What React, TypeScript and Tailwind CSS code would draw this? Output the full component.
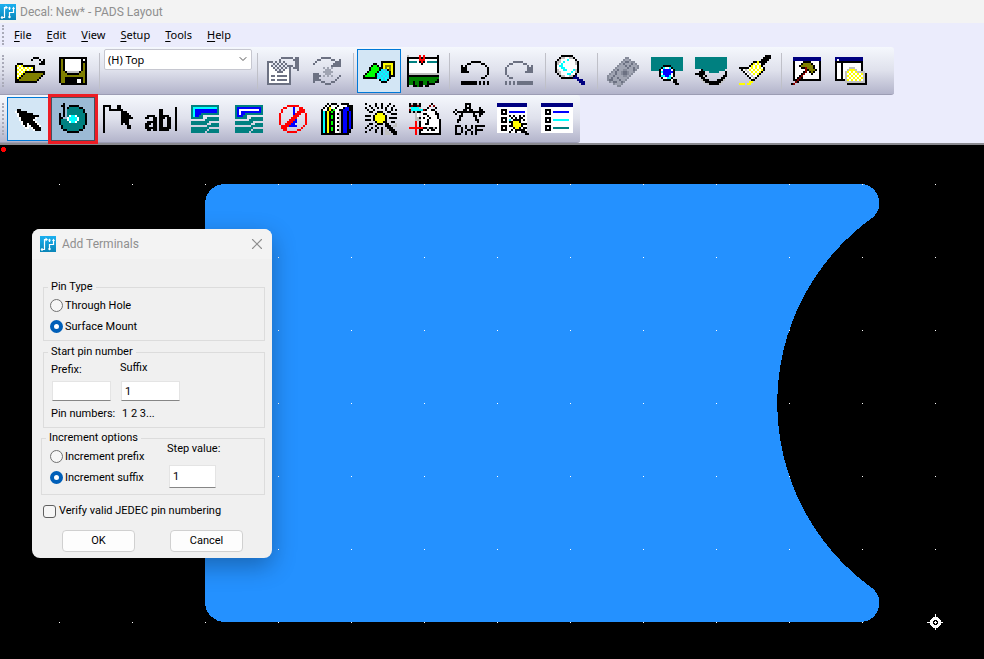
import { useState, type ReactNode } from "react";
import clsx from "clsx";
import { X, ChevronDown } from "lucide-react";

// one letter per colour in the 16x16 icon bitmaps below
const palette: Record<string, string> = {
  k: "#000000",
  w: "#ffffff",
  s: "#c0c0c0",
  g: "#6c7182",
  h: "#a0a4b2",
  m: "#868b9a",
  y: "#ffff00",
  o: "#808000",
  t: "#008080",
  b: "#0000ff",
  n: "#000080",
  c: "#00ffff",
  a: "#38c8f0",
  r: "#ff0000",
  d: "#800000",
  e: "#00ff00",
  f: "#008000",
};

const icons: Record<string, string[]> = {
  open: [
    "",
    "..........kkk",
    ".........k...k.k",
    "..............kk",
    "..kkk........kkk",
    ".kywykkkkkk",
    ".kwywywywyk",
    ".kywywywywk",
    ".kwywykkkkkkkkkk",
    ".kywykoooooooook",
    ".kwykoooooooook",
    ".kykoooooooook",
    ".kkoooooooook",
    ".kkkkkkkkkkk",
  ],
  save: [
    "",
    ".kkkkkkkkkkkkkk",
    ".kokwwwwwwwwkwk",
    ".kokwwwwwwwwkkk",
    ".kokwwwwwwwwkok",
    ".kokwwwwwwwwkok",
    ".kokwwwwwwwwkok",
    ".kokwwwwwwwwkok",
    ".kooksssssskook",
    ".koookkkkkkoook",
    ".kooooooooooook",
    ".kookkkkkkkkkok",
    ".kookkkkkkwwkok",
    ".kookkkkkkwwkok",
    "..kkkkkkkkkkkkk",
  ],
  props: [
    "",
    ".......gggggg.gg",
    "......g......ggg",
    "ggg.g.g.g.....gg",
    "gw.g.g.g.g....gg",
    "gwg.g.g.g.ggg.gg",
    "gwwg.g.g.g.g.ggg",
    "gwwwg.g.gwwg...g",
    "gwwwwgggwwwg",
    "gwwwwwwwwwwg",
    "gwggwgggggwg",
    "gwwwwwwwwwwg",
    "gwggwgggggwg",
    "gwwwwwwwwwwg",
    "gggggggggggg",
  ],
  sync: [
    "",
    ".....ggggg",
    "...gg.....gg..g",
    "..g.........ggg",
    ".g.........gggg",
    "..........ggggg",
    "......h.h.h",
    ".......hhh",
    "......hhhhh",
    ".ggg...hhh",
    ".gggg.h.h.h...g",
    ".ggg.........g",
    ".gggg.......g",
    ".g...gg...gg",
    ".......ggg",
  ],
  shapes: [
    "",
    "",
    "",
    ".........kkkkkkk",
    ".....kk..kyyyyyk",
    "....keek.kyoooyk",
    "...keeeekkyoyoyk",
    "...keeeekcaakoyk",
    "..keeeekcacackyk",
    ".keeeekcacacakyk",
    "keeeeekacacackkk",
    "kkkkkkkcacacak",
    "........kcack",
    ".........kkk",
  ],
  board: [
    "s.....r.r......k",
    "kkkkkkrkrkkkkkkk",
    "kwwwwwrrrwwwwwwk",
    "kttttwkrkwtttttk",
    "kwwwwwwkwwwwwwwk",
    "kwwwwwwwwwwwwwwk",
    "kwwwwwwwwwwwwwwk",
    "kwwwwwwwwwwwwwwk",
    "kwwwwwwwwwwwwwwk",
    "ksssssssssssssss",
    "kkkkkkkkkkkkkkkk",
    "kfffffffffffffff",
    "kffffffffffffffk",
    "kffkffkkffkfffkk",
    "kffkffkkffkkkk",
    "k..kkfkk.kk",
  ],
  undo: [
    "",
    "",
    "",
    "......kkkkk",
    "....kk.....kk",
    ".k.k.........k",
    ".kkk..........k",
    ".kkk..........k",
    ".kkkk.........k",
    "..............k",
    ".............k",
    "...........kk",
    "",
    ".kkkkkkkk.k.k.k",
    ".kkkkkkkk.k.k.k",
  ],
  redo: [
    "",
    "",
    "",
    ".....ggggg",
    "...gg.....gg",
    "..g.........g.g",
    ".g..........ggg",
    ".g..........ggg",
    ".g.........gggg",
    ".g",
    "..g",
    "...gg",
    "",
    ".g.g.g.gggggggg",
    ".g.g.g.gggggggg",
  ],
  zoom: [
    "...kkkkkk",
    "..ksswwssk",
    ".kswwwcwwwk",
    "ksswcwwwwwsk",
    "kswcwwwwwwsk",
    "kwccwwwwwwwk",
    "kwwccwwwwwwk",
    "kswwccwwwcsk",
    "ksswwwwwcwsk",
    ".kswwwccwwk",
    "..ksswwsskn",
    "...kkkkkknnn",
    "...........nnn",
    "............nnn",
    ".............nn",
  ],
  chip: [
    "",
    ".........mm",
    "........mhhm",
    ".......mhgghmm",
    "......mhghhhghm",
    ".....mhhhghghhhm",
    "....mhhhhhghhghm",
    "...mhghhmmhhhgm",
    "..mhghhmggmhhm",
    ".mhhghhmggmhm",
    "mhhghhhhmmhm",
    "mhghhghhhhm",
    "mgghhhghhm",
    ".mhgghhgm",
    "...mhhhm",
    ".....mm",
  ],
  inspect: [
    "",
    "tttttttttttttttt",
    "tttttttttttttttt",
    "tttttttttttttttt",
    "tttttttttttttttt",
    "ttttttkkkktttttt",
    "tttttkcwwckttttt",
    "ttttkwbbbbwktttt",
    "....kcbbbbbk",
    "....kwbbbbwk",
    "....kccbbcwk",
    ".....kwwcck",
    "......kkkkwkk",
    "...........kk",
    "............kk",
  ],
  flip: [
    "",
    "tttttttttttttttt",
    "tttttttttttttttt",
    "tttttttttttttttt",
    "tttttttttttttttt",
    "tttttttttttttttt",
    "tttttttttttttttt",
    "...kttttttttttt",
    "..kkk..ttttt...k",
    "kkkkk..........k",
    "..kksk........kk",
    "...kk........kk",
    "...skkk....kkks",
    "....skkkkkkkks",
    "......skkkkks",
  ],
  brush: [
    ".............kkk",
    "............kkkk",
    "...........kkkk",
    ".......kkykkkk",
    "......kywywkk",
    ".....kywywyk",
    "kkkkkwywywywk",
    ".kwswywywywyk",
    "..kwswywywyk",
    "...kwswywyk",
    "....kwswwk",
    ".....kwsk",
    "......kk",
    ".....yy",
    "yyy.yy",
  ],
  hammer: [
    "",
    ".nnnnnnnnnnnnnn",
    ".nnnnnnnnnnnnnn",
    ".kwwwwkkkkwwwwk",
    ".kwwwkooookwwwk",
    ".kwwkooooookwwk",
    ".kwwwkkdoookwwk",
    ".kwwwwwdkoookwk",
    ".kwwwwkdwkokwwk",
    ".kwwwkdwwwkwwwk",
    ".kwwkdwwwwwwwwk",
    ".kwkdkwwwwwwwwk",
    ".kkdkkkkkkkkkkk",
    "..dk",
    "kd",
  ],
  library: [
    "",
    "nnnnnnnnnnnnnn",
    "nwnnnnnnnnnnnn",
    "kkkkkkkkkkkkkk",
    "kwwkwwwwwwwwwk",
    "kwwkwwwwwwwwwk",
    "kwwkwwwssswwwk",
    "kwwkwwsyyyswwk",
    "kwwkwsywywyssss",
    "kwwkwswywywywysk",
    "kwwkwsywywywywsk",
    "kwwkwswywywywysk",
    "kkkkksywywywywsk",
    ".....ssssssssssk",
    "......kkkkkkkkkk",
  ],
  select: [
    "",
    "",
    "",
    "..kk",
    ".wkkkkk",
    "..wkkkkkkk",
    "..wkkkkkkkkkk",
    "...wkkkkkkkw",
    "...wkkkkkkw",
    "....wkkkkkkw",
    "....wkkwkkkkw",
    ".....wkwwkkkkw",
    "......ww.wkkkk",
    "..........wkkk",
  ],
  terminal: [
    "...k",
    "..kk..kkkkk",
    "...k.ktttttkk",
    "...k.ttttttttk",
    "...k.ttttttttk",
    ".k.k.tttttttttk",
    ".k.k.twccwttttk",
    ".kk..wccccwtttk",
    ".ktttwccccwtttk",
    ".kttttwccwttttk",
    ".kttttttttttttk",
    "..kttttttttttk",
    "..kttttttttttk",
    "...kkttttttkk",
    ".....kkkkkk",
  ],
  outline: [
    "",
    ".kkkk...kk",
    ".k..k...kk",
    ".k..kkkkkkk",
    ".k........kkk",
    ".k........kkkk",
    ".k........kkkkk",
    ".k........kkkkkk",
    ".k........kkkk",
    ".k........kkkk",
    ".k........k.kk",
    ".k...........kk",
    ".k...........kk",
    ".k",
    ".k",
  ],
  label: [
    "",
    "",
    "...............k",
    ".......kk......k",
    ".......kk......k",
    ".......kk......k",
    ".kkkk..kkkkk...k",
    "kk..kk.kkk.kk..k",
    "....kk.kk..kk..k",
    ".kkkkk.kk..kk..k",
    "kkk.kk.kk..kk..k",
    "kk..kk.kk..kk..k",
    "kkkkkk.kkkkkk..k",
    ".kk.kk.kkkkk...k",
  ],
  copper: [
    "",
    ".tttttttttttttt",
    ".tcccccccccccct",
    ".tcbbbbbbbbbbbt",
    ".tcbbbbbbbbbbbt",
    ".tcbbbttttttttt",
    ".tcbbtt",
    ".tttttt..tttttt",
    "........ttttttt",
    ".ttttttttt",
    ".tttttttt..tttt",
    ".........tttttt",
    ".ttttttttt",
    ".tttttttt.ttttt",
    ".ttttttt.tttttt",
  ],
  cutout: [
    "",
    ".tttttttttttttt",
    ".tbbbbbbbbbbbbt",
    ".tbwwwwwwwwwwbt",
    ".tbwbbbbbbbbbbt",
    ".tbwbbttttttttt",
    ".tbbbtt",
    ".tttttt..tttttt",
    "........ttttttt",
    ".ttttttttt",
    ".tttttttt..tttt",
    ".........tttttt",
    ".ttttttttt",
    ".tttttttt.ttttt",
    ".ttttttt.tttttt",
  ],
  keepout: [
    "",
    ".....rrrrrr",
    "...rr...b..rr",
    "..r.....b..rrr",
    "..r.....b.rrrr",
    ".r......brrr..r",
    ".r......rrr...r",
    ".r.....rrr....r",
    ".r....rrrb....r",
    ".r...rrrbb....r",
    ".r..rrrbb.....r",
    "..rrrrbbbb...r",
    "..rrr.......r",
    "...rr.....rr",
    ".....rrrrr",
  ],
  books: [
    "...k.kkk..kkkk",
    "..kwkwwwkwwwwkkk",
    ".kwkywwkwwwkbbkk",
    "kwwkykewwkkbbbkk",
    "kckykekwwskbbkbk",
    "kckykkkwkskbbkbk",
    "kckykekwwskbbkbk",
    "kckykekwkskbbkbk",
    "kckykkkwwskbbkbk",
    "kckykekwkskbbkbk",
    "kckykekwwskbbkbk",
    "kckykkkwkskbbkbk",
    "kckykekwwskbbkbk",
    "kckykekwkskbbkk",
    "kckykkkwwskbbkk",
    "kkkkkkkkkkkkkk",
  ],
  wizard: [
    "k....k..k...k",
    "..k..k..k..k..k",
    "k..k..k.k.k..k",
    ".k..k.....k..k.k",
    "..kk..kkk..kk",
    ".....kyyyk...kkk",
    "kkk.kyyyyyk",
    "....kyyyyyk.kkkk",
    "kkk.kyyyyyk",
    ".....kyyykk..kk",
    "..kk..kkk.kk...s",
    ".k...k....kkk.ss",
    "k..k..k.k..kkk",
    "..k..k..k.s.kkk",
    "k....k..k.ss.kkk",
    "........k.sss.kk",
  ],
  decal: [
    "kskksk.....k",
    "kdkkdk....d.d",
    "sccccs...k...k",
    "dccccccdkwwkk",
    "kskskk.wwwwwwk",
    "...sw.wkkwwwwkk",
    "...sw.wwwkwwwwk",
    "...sskwkwwkwwwk",
    "...ssswwwkwwwwwk",
    "...r.kwwwkwwwwwk",
    "...r.kwwkkwwwwwk",
    "...r.kwwwwwwwwwk",
    "rrrrrrrkkskkskwk",
    "...r.kkwwkwkkwwk",
    "...r.kwwwwwwwwwk",
    "...r.kkkkkkkkkkk",
  ],
  dxf: [
    "......kkk",
    "......k.k",
    "......kkk....k",
    ".k...kk.kk...kk",
    "k.kkkkkkkkkkkkkk",
    ".k..k.....k..kk",
    "...kk.....kk.k",
    "...k.......k",
    "..kk.......kk",
    "..k.........k",
    "",
    ".kkk..k..k.kkkkk",
    ".k..k.k..k.k",
    ".k..k..kk..kkkk",
    ".k..k.k..k.k",
    ".kkk..k..k.k",
  ],
  quality: [
    "nnnnnnnnnnnnnnn",
    "nnnnnnnnnnnnnnn",
    "wwwwwwwwwwwwwww",
    "wwkkkwwwwwwwwww",
    "wwkwkwbbbbbbbbw",
    "wwkkkwwwwwwwwww",
    "wwwwwwkwkwwkwkw",
    "wwkkkwwkwkwkkww",
    "wwkwkwcwkkkkwkw",
    "wwkkkwkkyyykwww",
    "wwwwwwwkyyyykkk",
    "wwkkkwkkyyyykww",
    "wwkwkwwwkyykwkk",
    "wwkkkwwkwkkkkkw",
    "wwwwwwkwwkwwkkk",
    "..............kk",
  ],
  list: [
    "nnnnnnnnnnnnnnnn",
    "nnnnnnnnnnnnnnnn",
    "wwwwwwwwwwwwwwww",
    "wwkkkwwwwwwwwwww",
    "wwkwkwbbbbbbbbww",
    "wwkkkwwwwwwwwwww",
    "wwwwwwwwwwwwwwww",
    "wwkkkwwwwwwwwwww",
    "wwkwkwccccccccww",
    "wwkkkwwwwwwwwwww",
    "wwwwwwwwwwwwwwww",
    "wwkkkwwwwwwwwwww",
    "wwkwkwttttttttww",
    "wwkkkwwwwwwwwwww",
    "wwwwwwwwwwwwwwww",
  ],
};

function PixelIcon({ name }: { name: string }) {
  return (
    <svg viewBox="0 0 16 16" className="size-8" shapeRendering="crispEdges" aria-hidden="true">
      {icons[name].map((row, y) =>
        [...row].map((ch, x) =>
          palette[ch] ? (
            <rect key={`${x}-${y}`} x={x} y={y} width="1" height="1" fill={palette[ch]} />
          ) : null
        )
      )}
    </svg>
  );
}

function AppLogo() {
  return (
    <svg viewBox="0 0 16 16" className="size-4 shrink-0" aria-hidden="true">
      <defs>
        <linearGradient id="logo" x1="0" y1="0" x2="0" y2="1">
          <stop offset="0" stopColor="#1bb0f0" />
          <stop offset="1" stopColor="#0a86b8" />
        </linearGradient>
      </defs>
      <rect width="16" height="16" fill="url(#logo)" />
      <path
        d="M1.500 13.500h3V3.500h2M9.500 13V8.500h4V4M9.500 3v3"
        fill="none"
        stroke="#fff"
        strokeWidth="1.200"
      />
      <path d="M5.500 1.500 8 3.500 5.500 5.500ZM12 5 13.500 2.500 15 5ZM8 4.500 9.500 2.500 11 4.500Z" fill="#fff" />
      <circle cx="2" cy="13.500" r="1.200" fill="#fff" />
      <circle cx="9.500" cy="13" r="1.200" fill="#fff" />
    </svg>
  );
}

type ToolProps = { name: string; title: string; look?: "on" | "pressed" };

function ToolButton({ name, title, look }: ToolProps) {
  return (
    <button
      title={title}
      aria-label={title}
      className={clsx(
        "flex size-11 shrink-0 items-center justify-center border",
        !look && "border-transparent",
        look === "on" && "border-[#0078d7] bg-[#d3e6f5]",
        look === "pressed" && "border-[#45515e] bg-[#9bbad5] outline-3 outline-[#ed1c24]"
      )}
    >
      <PixelIcon name={name} />
    </button>
  );
}

function Separator() {
  return (
    <div className="flex w-2 shrink-0 justify-center">
      <div className="h-9 w-px bg-[#bfc0c8]" />
    </div>
  );
}

function Grip({ className }: { className: string }) {
  return <div className={clsx("w-[2px] shrink-0 border-l-2 border-dotted border-[#a9aab8]", className)} />;
}

const menus = ["File", "Edit", "View", "Setup", "Tools", "Help"];

const drafting: ToolProps[] = [
  { name: "select", title: "Select", look: "on" },
  { name: "terminal", title: "Terminal", look: "pressed" },
  { name: "outline", title: "2D Line" },
  { name: "label", title: "Text" },
  { name: "copper", title: "Copper" },
  { name: "cutout", title: "Copper Cutout" },
  { name: "keepout", title: "Keepout" },
  { name: "books", title: "From Library" },
  { name: "wizard", title: "Wizard" },
  { name: "decal", title: "Add New Label" },
  { name: "dxf", title: "Import DXF" },
  { name: "quality", title: "Decal Options" },
  { name: "list", title: "Properties" },
];

function Group({ title, className, children }: { title: string; className: string; children: ReactNode }) {
  return (
    <fieldset className={clsx("border border-[#dcdcdc]", className)}>
      <legend className="ml-1 px-[3px] leading-3">{title}</legend>
      {children}
    </fieldset>
  );
}

function Radio({ name, label, checked, onChange }: { name: string; label: string; checked: boolean; onChange: () => void }) {
  return (
    <label className="flex h-[21px] items-center gap-[2px] whitespace-nowrap">
      <input
        type="radio"
        name={name}
        checked={checked}
        onChange={onChange}
        className="size-[13px] appearance-none rounded-full border border-[#707070] bg-[#f6f6f6] checked:border-4 checked:border-[#005fb8] checked:bg-white"
      />
      {label}
    </label>
  );
}

const fieldStyle = "h-5 border border-[#e4e4e4] border-b-[#868686] bg-white px-[3px] outline-none";
const buttonStyle = "h-[22px] w-[73px] rounded-[4px] border border-[#d0d0d0] bg-[#fdfdfd]";

function AddTerminals() {
  const [pinType, setPinType] = useState("smd");
  const [increment, setIncrement] = useState("suffix");
  const [prefix, setPrefix] = useState("");
  const [suffix, setSuffix] = useState("1");
  const [step, setStep] = useState("1");
  const [verify, setVerify] = useState(false);

  return (
    <div
      role="dialog"
      aria-label="Add Terminals"
      className="absolute left-8 top-[84px] w-60 overflow-hidden rounded-lg bg-[#f0f0f0] pb-[6px] font-['Roboto',sans-serif] shadow-[0_8px_24px_rgba(0,0,0,0.3)]"
    >
      <div className="flex h-[30px] items-center bg-[#f3f3f3] pl-2 pr-[6px] text-[12px] text-[#8f8f8f]">
        <AppLogo />
        <span className="ml-[6px] flex-1">Add Terminals</span>
        <button aria-label="Close">
          <X className="size-[18px]" strokeWidth={1.5} />
        </button>
      </div>

      <div className="pl-[9px] pr-[7px] pt-[22px]">
        <Group title="Pin Type" className="ml-[2px] h-[60px]">
          <div className="pl-[6px] pt-[2px]">
            <Radio name="pin" label="Through Hole" checked={pinType === "th"} onChange={() => setPinType("th")} />
            <Radio name="pin" label="Surface Mount" checked={pinType === "smd"} onChange={() => setPinType("smd")} />
          </div>
        </Group>

        <Group title="Start pin number" className="ml-[2px] mt-[5px] h-[82px]">
          <div className="flex gap-[9px] pl-[7px]">
            <div className="flex w-[60px] flex-col">
              <label htmlFor="prefix" className="h-[23px] pt-1">Prefix:</label>
              <input id="prefix" value={prefix} onChange={(e) => setPrefix(e.target.value)} className={clsx(fieldStyle, "ml-px")} />
            </div>
            <div className="flex w-[60px] flex-col">
              <label htmlFor="suffix" className="h-[23px] pt-[2px]">Suffix</label>
              <input id="suffix" value={suffix} onChange={(e) => setSuffix(e.target.value)} className={clsx(fieldStyle, "ml-px")} />
            </div>
          </div>
          <div className="flex pl-[7px] pt-[5px]">
            <span className="w-[71px]">Pin numbers:</span>
            <span>1 2 3...</span>
          </div>
        </Group>

        <Group title="Increment options" className="mt-1 h-[63px]">
          <div className="flex pl-2">
            <div className="w-[117px] pt-[2px]">
              <Radio name="inc" label="Increment prefix" checked={increment === "prefix"} onChange={() => setIncrement("prefix")} />
              <Radio name="inc" label="Increment suffix" checked={increment === "suffix"} onChange={() => setIncrement("suffix")} />
            </div>
            <div className="flex flex-col">
              <label htmlFor="step" className="h-[21px] whitespace-nowrap leading-[10px]">Step value:</label>
              <input
                id="step"
                value={step}
                onChange={(e) => setStep(e.target.value)}
                className="ml-[2px] h-[23px] w-[47px] border border-[#e4e4e4] border-b-[#868686] bg-white px-[3px] outline-none"
              />
            </div>
          </div>
        </Group>

        <label className="ml-[2px] mt-2 flex items-center gap-[3px]">
          <input
            type="checkbox"
            checked={verify}
            onChange={(e) => setVerify(e.target.checked)}
            className="size-[13px] appearance-none rounded-[3px] border border-[#606060] bg-[#f6f6f6] checked:bg-[#005fb8]"
          />
          Verify valid JEDEC pin numbering
        </label>

        <div className="mt-[11px] flex justify-between pl-[21px] pr-[22px]">
          <button className={buttonStyle}>OK</button>
          <button className={buttonStyle}>Cancel</button>
        </div>
      </div>
    </div>
  );
}

function Workspace() {
  const cols = Array.from({ length: 13 }, (_, i) => 59 + i * 73);
  const rows = Array.from({ length: 7 }, (_, i) => 39 + i * 73);
  return (
    <svg className="absolute inset-0 h-full w-full" shapeRendering="crispEdges" aria-label="Decal canvas">
      {/* copper pad */}
      <path
        d="M225 39H860A19 19 0 0 1 872 73A228 228 0 0 0 872 443A19 19 0 0 1 860 477H225A20 20 0 0 1 205 457V59A20 20 0 0 1 225 39Z"
        fill="#2491ff"
      />
      {rows.map((y) => cols.map((x) => <rect key={`${x}-${y}`} x={x} y={y} width="1" height="1" fill="#fff" />))}
      {/* origin */}
      <circle cx="935.5" cy="477.5" r="5.500" fill="#fff" />
      <path d="M927 477.500h16M935.500 469v16" stroke="#fff" />
      <path d="M934 475h3v1h1v3h-1v1h-3v-1h-1v-3h1z" fill="#000" />
      <path d="M935 476h1v1h1v1h-1v1h-1v-1h-1v-1h1z" fill="#fff" />
      <circle cx="3.500" cy="4.500" r="2.500" fill="#f00" />
    </svg>
  );
}

const bar = "flex h-12 rounded-r-[3px] border-b border-[#9c9db4] bg-linear-to-b from-[#f5f8fd] via-[#dfe1ec] to-[#b3b4cb]";

export default function App() {
  return (
    <div className="flex min-h-screen flex-col bg-black font-['Noto_Sans',sans-serif] text-[11px] leading-4 text-black">
      <header className="flex h-[23px] items-center gap-1 bg-[#f3f3f3] font-['Roboto',sans-serif] text-[12px] text-[#8f8f8f]">
        <AppLogo />
        <h1>Decal: New* - PADS Layout</h1>
      </header>

      <div className="border-b-2 border-[#8a8a90] bg-[#ebecfc]">
        <nav className="flex h-6 items-center pl-[2px]">
          <Grip className="mr-[10px] h-5" />
          <div className="flex gap-[15px]">
            {menus.map((m) => (
              <button key={m}>
                <span className="underline underline-offset-2">{m[0]}</span>
                {m.slice(1)}
              </button>
            ))}
          </div>
        </nav>

        <div className={clsx(bar, "w-[894px] pl-[2px]")}>
          <Grip className="mr-[3px] mt-2 h-8" />
          <div className="flex items-center pt-px">
            <ToolButton name="open" title="Open" />
            <ToolButton name="save" title="Save" />
            <Separator />
            <div className="relative mx-px mt-px self-start">
              <select
                aria-label="Layer"
                className="h-[21px] w-[148px] appearance-none rounded-[2px] border border-[#c6c7d0] bg-white pl-[3px]"
              >
                <option>(H) Top</option>
              </select>
              <ChevronDown className="pointer-events-none absolute right-[3px] top-1 size-3 text-[#555]" strokeWidth={2} />
            </div>
            <Separator />
            <ToolButton name="props" title="Properties" />
            <ToolButton name="sync" title="Cycle" />
            <Separator />
            <ToolButton name="shapes" title="Drafting Toolbar" look="on" />
            <ToolButton name="board" title="Board" />
            <Separator />
            <ToolButton name="undo" title="Undo" />
            <ToolButton name="redo" title="Redo" />
            <Separator />
            <ToolButton name="zoom" title="Zoom" />
            <Separator />
            <ToolButton name="chip" title="Part" />
            <ToolButton name="inspect" title="Inspect" />
            <ToolButton name="flip" title="Flip" />
            <ToolButton name="brush" title="Redraw" />
            <Separator />
            <ToolButton name="hammer" title="Output Window" />
            <ToolButton name="library" title="Project Explorer" />
          </div>
        </div>

        <div className={clsx(bar, "w-[580px] pl-[2px]")}>
          <Grip className="mr-[3px] mt-2 h-8" />
          <div className="flex items-center pt-px">
            {drafting.map((t) => (
              <ToolButton key={t.name} {...t} />
            ))}
          </div>
        </div>
      </div>

      <main className="relative min-h-[440px] flex-1">
        <Workspace />
        <AddTerminals />
      </main>
    </div>
  );
}
